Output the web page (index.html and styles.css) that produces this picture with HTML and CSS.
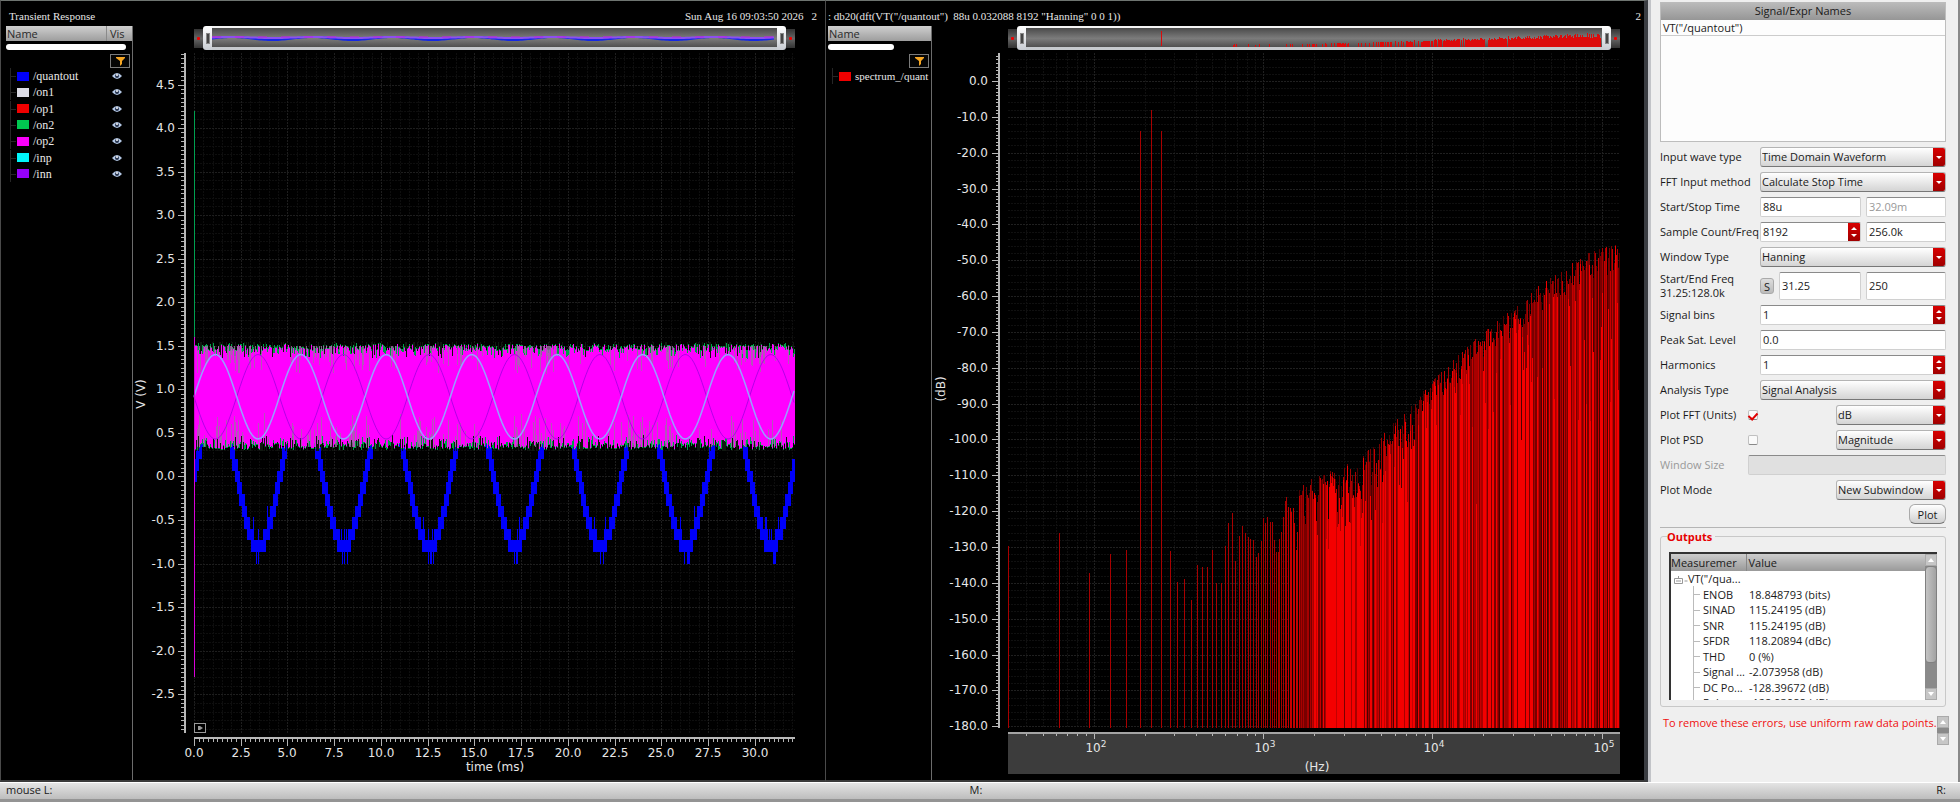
FILE: index.html
```html
<!DOCTYPE html>
<html lang="en">
<head>
<meta charset="utf-8">
<title>Transient Response</title>
<link rel="stylesheet" href="styles.css">
</head>
<body>
<main class="workspace">
  <section class="pane pane-time">
    <header class="pane-title"><span>Transient Response</span><span class="push">Sun Aug 16 09:03:50 2026</span><span class="pane-no">2</span></header>
    <div class="pane-body">
      <aside class="legend">
        <div class="legend-head"><span class="head-name">Name</span><span class="head-vis">Vis</span></div>
        <div class="legend-scroll"></div>
        <button class="filter" aria-label="Filter"><svg width="9" height="9" viewBox="0 0 9 9"><path d="M0 0h9v1L6 4v3L4 9V4L0 1z" fill="#f6a623"/></svg></button>
        <ul class="signals" id="signals"></ul>
      </aside>
      <div class="chart">
        <div class="slider"><span class="stop"></span><span class="grip"><i></i></span><svg class="mini" id="miniTime"></svg><span class="grip grip-end"><i></i></span><span class="stop"></span></div>
        <svg class="plot" id="timePlot"></svg>
      </div>
    </div>
  </section>
  <section class="pane pane-freq">
    <header class="pane-title"><span class="expr">: db20(dft(VT("/quantout")&nbsp; 88u 0.032088 8192 "Hanning" 0 0 1))</span><span class="push pane-no">2</span></header>
    <div class="pane-body">
      <aside class="legend legend-narrow">
        <div class="legend-head"><span class="head-name">Name</span></div>
        <div class="legend-scroll"></div>
        <button class="filter" aria-label="Filter"><svg width="9" height="9" viewBox="0 0 9 9"><path d="M0 0h9v1L6 4v3L4 9V4L0 1z" fill="#f6a623"/></svg></button>
        <ul class="signals signals-single"><li><span class="swatch swatch-red"></span><span>spectrum_/quant</span></li></ul>
      </aside>
      <div class="chart">
        <div class="slider"><span class="stop"></span><span class="grip"><i></i></span><svg class="mini" id="miniFreq"></svg><span class="grip grip-end"><i></i></span><span class="stop"></span></div>
        <svg class="plot" id="freqPlot"></svg>
      </div>
    </div>
  </section>
  <form class="panel">
    <div class="names">
      <div class="names-head">Signal/Expr Names</div>
      <div class="names-item">VT("/quantout")</div>
    </div>
    <div class="fields">
      <div class="row"><label for="wave">Input wave type</label><div class="combo"><select id="wave"><option>Time Domain Waveform</option></select><span class="arrow"></span></div></div>
      <div class="row"><label for="method">FFT Input method</label><div class="combo"><select id="method"><option>Calculate Stop Time</option></select><span class="arrow"></span></div></div>
      <div class="row"><label for="start">Start/Stop Time</label><div class="box"><input id="start" value="88u"></div><div class="box box-side"><input value="32.09m" aria-label="Stop time" disabled></div></div>
      <div class="row"><label for="count">Sample Count/Freq</label><div class="box"><input id="count" value="8192"><span class="spin"></span></div><div class="box box-side"><input value="256.0k" aria-label="Sample frequency"></div></div>
      <div class="row"><label for="window">Window Type</label><div class="combo"><select id="window"><option>Hanning</option></select><span class="arrow"></span></div></div>
      <div class="row row-tall"><label for="fstart">Start/End Freq<br>31.25:128.0k</label><button type="button" class="small">S</button><div class="box"><input id="fstart" value="31.25"></div><div class="box box-side"><input value="250" aria-label="End frequency"></div></div>
      <div class="row"><label for="bins">Signal bins</label><div class="box"><input id="bins" value="1"><span class="spin"></span></div></div>
      <div class="row"><label for="peak">Peak Sat. Level</label><div class="box"><input id="peak" value="0.0"></div></div>
      <div class="row"><label for="harm">Harmonics</label><div class="box"><input id="harm" value="1"><span class="spin"></span></div></div>
      <div class="row"><label for="analysis">Analysis Type</label><div class="combo"><select id="analysis"><option>Signal Analysis</option></select><span class="arrow"></span></div></div>
      <div class="row row-check"><label for="fft">Plot FFT (Units)</label><input type="checkbox" id="fft" checked><div class="combo combo-short"><select aria-label="Units"><option>dB</option></select><span class="arrow"></span></div></div>
      <div class="row row-check"><label for="psd">Plot PSD</label><input type="checkbox" id="psd"><div class="combo combo-short"><select aria-label="PSD scale"><option>Magnitude</option></select><span class="arrow"></span></div></div>
      <div class="row row-check"><label for="wsize" class="muted">Window Size</label><div class="box box-off"><input id="wsize" disabled></div></div>
      <div class="row row-check"><label for="mode">Plot Mode</label><div class="combo combo-short"><select id="mode"><option>New Subwindow</option></select><span class="arrow"></span></div></div>
    </div>
    <div class="actions"><button type="button" class="plot-btn">Plot</button></div>
    <fieldset class="outputs">
      <legend>Outputs</legend>
      <div class="results">
        <table>
          <thead><tr><th class="sorted">Measuremer</th><th>Value</th></tr></thead>
          <tbody>
            <tr class="root"><td><svg width="17" height="11" viewBox="0 0 17 11"><path d="M.5 3.500h8v5h-8zM2 6h5M4.500 1v2M10.500 6h3" fill="none" stroke="#999"/></svg>VT("/qua...</td><td></td></tr>
            <tr><td>ENOB</td><td>18.848793 (bits)</td></tr>
            <tr><td>SINAD</td><td>115.24195 (dB)</td></tr>
            <tr><td>SNR</td><td>115.24195 (dB)</td></tr>
            <tr><td>SFDR</td><td>118.20894 (dBc)</td></tr>
            <tr><td>THD</td><td>0 (%)</td></tr>
            <tr><td>Signal ...</td><td>-2.073958 (dB)</td></tr>
            <tr><td>DC Po...</td><td>-128.39672 (dB)</td></tr>
            <tr><td>Rela...</td><td>-128.93988 (dB)</td></tr>
          </tbody>
        </table>
        <div class="vbar"><span class="up"></span><span class="thumb"></span><span class="track"></span><span class="down"></span></div>
      </div>
    </fieldset>
    <div class="error"><p>To remove these errors, use uniform raw data points.</p><div class="vbar vbar-mini"><span class="up"></span><span class="track"></span><span class="down"></span></div></div>
  </form>
</main>
<footer class="status"><span>mouse L:</span><span class="status-mid">M:</span><span class="status-end">R:</span></footer>
<script src="plots.js"></script>
</body>
</html>
```
FILE: styles.css
```css
* { box-sizing: border-box; }
body { margin: 0; height: 100vh; display: flex; flex-direction: column; background: #000; font: 11px/15px "Open Sans", "Noto Sans", sans-serif; color: #1a1a1a; overflow: hidden; }
input, select, button { font: inherit; color: inherit; margin: 0; }

.workspace { flex: 1; min-height: 0; display: flex; }
.pane { flex: 1 1 0; min-width: 0; display: flex; flex-direction: column; border: 1px solid #4a4a4a; border-top-color: #6e7470; border-bottom: 2px solid #3a3a3a; background: #000; }
.pane-time { flex-basis: 8px; }
.pane-freq { border-left: 0; border-right: 4px solid #3a3d42; }
.pane-title { height: 25px; display: flex; align-items: center; padding: 4px 8px 0 8px; color: #e6e6e6; font: 11px/16px "Liberation Serif", serif; white-space: pre; }
.pane-freq .pane-title { padding: 4px 3px 0 2px; }
.push { margin-left: auto; }
.pane-title .pane-no { padding-left: 8px; }
.pane-body { flex: 1; min-height: 0; display: flex; }

.legend { width: 132px; flex: none; padding-left: 5px; border-right: 1px solid #6c6c6c; overflow: hidden; display: flex; flex-direction: column; align-items: flex-start; }
.legend-narrow { width: 106px; padding-left: 2px; }
.legend-head { align-self: stretch; height: 15px; display: flex; background: linear-gradient(#cfcfcf, #9d9d9d); color: #2a2a2a; }
.head-name { flex: 1; padding-left: 1px; }
.head-vis { width: 26px; padding-left: 3px; border-left: 1px solid #8a8a8a; }
.legend-scroll { width: 120px; height: 6px; margin-top: 3px; border-radius: 3px; background: #fff; flex: none; }
.legend-narrow .legend-scroll { width: 66px; }
.filter { align-self: flex-end; margin: 4px 2px 0 0; width: 20px; height: 14px; padding: 0; border: 1px solid #7b7b7b; background: #050505; display: flex; align-items: center; justify-content: center; flex: none; }
.signals { list-style: none; margin: 0; padding: 0 10px 0 0; width: 100%; height: 114px; display: flex; flex-direction: column; justify-content: space-between; color: #e8e8e8; font: 12px/16px "Liberation Serif", serif; white-space: nowrap; }
.signals li { display: flex; align-items: center; padding-left: 4px; height: 16px; }
.signals li::before { content: ""; width: 5px; height: 16px; border-left: 1px solid #262626; background: linear-gradient(#262626, #262626) 0 8px / 5px 1px no-repeat; margin-right: 1px; flex: none; }
.signals-single { height: 16px; padding: 0; font-size: 11px; }
.swatch { width: 12px; height: 9px; margin-right: 4px; flex: none; }
.swatch-blue { background: #0000fa; }
.swatch-white { background: #dcdce6; }
.swatch-red { background: #f00000; }
.swatch-green { background: #00c850; }
.swatch-pink { background: #fa00fa; }
.swatch-cyan { background: #00f5fa; }
.swatch-purple { background: #9600fa; }
.signals svg { margin-left: auto; }

.chart { flex: 1; min-width: 0; display: flex; flex-direction: column; }
.slider { height: 24px; margin: 0 30px 0 61px; display: flex; align-items: center; flex: none; }
.pane-freq .slider { margin: 0 24px 0 76px; }
.stop { width: 9px; height: 19px; background: linear-gradient(#333, #666, #333); display: flex; align-items: center; justify-content: center; }
.stop::before { content: ""; width: 3px; height: 3px; background: #e00; border-radius: 1px; }
.grip { width: 9px; height: 24px; background: linear-gradient(#fff, #c8ccd2); border-radius: 3px 0 0 3px; display: flex; align-items: center; justify-content: center; }
.grip-end { border-radius: 0 3px 3px 0; }
.grip i { width: 4px; height: 11px; background: #444; border: 1px solid #888; }
.mini { flex: 1; min-width: 0; height: 24px; border-top: 2px solid #f4f4f4; border-bottom: 3px solid #c6cace; background: linear-gradient(#4a4a4a, #7c7c7c 55%, #505050); }
.plot { display: block; width: 100%; flex: 1; min-height: 0; }
.plot text { font: 12px "DejaVu Sans", sans-serif; fill: #e6e6e6; }

.panel { width: 312px; flex: none; display: flex; flex-direction: column; padding: 2px 12px 0 9px; background: #efefef; border: 0 solid #a2a2a2; border-left: 3px solid #c2c4c8; border-right: 2px solid #888; }
.names { height: 140px; background: #fdfdfd; border: 1px solid #bdbdbd; border-top: 0; }
.names-head { height: 18px; text-align: center; line-height: 18px; background: linear-gradient(#bcbcbc, #969696); }
.names-item { height: 16px; padding-left: 2px; border-bottom: 1px solid #ccc; }
.fields { display: flex; flex-direction: column; gap: 5px; margin-top: 5px; }
.row { display: flex; gap: 5px; height: 20px; align-items: stretch; }
.row > label { width: 95px; flex: none; align-self: center; white-space: nowrap; padding-bottom: 1px; }
.row > label.muted { color: #999; }
.row-tall { height: 28px; }
.row-tall > label { line-height: 14px; }
.row-check > label { width: 83px; }
.combo { flex: 1; min-width: 0; display: flex; border: 1px solid #b4b4b4; border-bottom-color: #777; border-radius: 3px; background: linear-gradient(#fff, #d4d4d4); overflow: hidden; }
.combo-short { flex: none; width: 110px; margin-left: auto; }
.combo select { appearance: none; flex: 1; min-width: 0; border: 0; background: none; padding: 0 0 1px 1px; outline: 0; }
.arrow { width: 12px; background: linear-gradient(#d80000, #a00000); display: flex; align-items: center; justify-content: center; }
.arrow::before { content: ""; border: 3px solid transparent; border-top: 3px solid #fff; border-bottom: 0; }
.box { flex: 1; min-width: 0; display: flex; background: #fff; border: 1px solid #d0d0d0; border-top-color: #8a8a8a; border-radius: 2px; overflow: hidden; }
.box-side { flex: none; width: 80px; }
.box-off { background: #e0e0e0; }
.box input { flex: 1; width: 0; min-width: 0; border: 0; padding: 0 2px 1px; background: none; outline: 0; }
.box input:disabled { color: #999; }
.spin { width: 12px; background: linear-gradient(#d80000, #a00000); display: flex; flex-direction: column; align-items: center; justify-content: space-evenly; }
.spin::before { content: ""; border: 3px solid transparent; border-bottom-color: #fff; border-top: 0; }
.spin::after { content: ""; border: 3px solid transparent; border-top-color: #fff; border-bottom: 0; }
.small { align-self: center; width: 14px; height: 16px; padding: 0; border: 1px solid #aaa; border-radius: 3px; background: linear-gradient(#ddd, #bbb); line-height: 13px; }
.row input[type="checkbox"] { appearance: none; align-self: center; width: 10px; height: 10px; border: 1px solid #c0c0c0; border-bottom-color: #888; border-radius: 2px; background: #fafafa; display: flex; justify-content: center; }
.row input[type="checkbox"]:checked::before { content: ""; width: 4px; height: 7px; border: solid #e00000; border-width: 0 2px 2px 0; transform: rotate(42deg); flex: none; }
.actions { display: flex; justify-content: flex-end; padding: 4px 0 3px; border-bottom: 1px solid #b5b5b5; }
.plot-btn { width: 37px; height: 20px; padding: 0; border: 1px solid #aaa; border-bottom-color: #777; border-radius: 6px; background: linear-gradient(#fff, #d0d0d0); }
.outputs { margin: 1px 0 0; padding: 8px 8px 6px; border: 1px solid #c8c8c8; border-radius: 3px; min-width: 0; }
.outputs legend { margin-left: -2px; padding: 0 3px 0 0; color: #e60000; font-weight: bold; }
.results { height: 148px; display: flex; overflow: hidden; background: #fff; border: solid #333; border-width: 2px 0 0 2px; }
.results table { flex: 1; width: 100%; min-width: 0; align-self: flex-start; table-layout: fixed; border-collapse: collapse; white-space: nowrap; line-height: 15px; }
.results th { height: 17px; padding: 0 0 0 2px; text-align: left; font-weight: normal; background: linear-gradient(#cdcdcd, #999); }
.results th.sorted { width: 75px; border-right: 1px solid #888; padding: 0; }
.results td { height: 15px; padding: 0 0 0 3px; }
.results tr:nth-child(even) td { height: 16px; }
.results td:first-child { padding-left: 32px; background: linear-gradient(#bbb, #bbb) 22px 0 / 1px 100% no-repeat, linear-gradient(#bbb, #bbb) 22px 8px / 7px 1px no-repeat; }
.results .root td:first-child { padding-left: 3px; background: none; }
.root svg { vertical-align: middle; margin-right: -3px; }
.vbar { width: 12px; flex: none; display: flex; flex-direction: column; background: #8a8a8a; }
.vbar .up, .vbar .down { height: 12px; display: flex; align-items: center; justify-content: center; background: #c6c6c6; border: 1px solid #aaa; flex: none; }
.up::before { content: ""; border: 3px solid transparent; border-top: 0; border-bottom: 4px solid #fff; }
.down::before { content: ""; border: 3px solid transparent; border-bottom: 0; border-top: 4px solid #fff; }
.thumb { height: 97px; border: 1px solid #808080; border-radius: 4px; background: linear-gradient(90deg, #c4c4c4, #a2a2a2); }
.track { flex: 1; }
.error { display: flex; justify-content: space-between; margin-top: 9px; padding-left: 3px; color: #f01010; }
.error p { margin: 0; line-height: 14px; white-space: nowrap; }
.vbar-mini { height: 29px; }

.status { height: 20px; flex: none; display: grid; grid-template-columns: 1fr auto 1fr; padding: 0 14px 0 6px; line-height: 14px; background: linear-gradient(#e4e4e4, #bdbdbd); border-top: 1px solid #fff; border-bottom: 3px solid #949494; }
.status-end { text-align: right; }
```
FILE: plots.js
```js
(function () {
  var signals = [["/quantout", "blue"], ["/on1", "white"], ["/op1", "red"], ["/on2", "green"], ["/op2", "pink"], ["/inp", "cyan"], ["/inn", "purple"]];
  var eye = '<svg width="10" height="8" viewBox="0 0 10 8"><path d="M0 4Q5-2 10 4Q5 10 0 4z" fill="#b4c8e6"/><circle cx="5" cy="4" r="2" fill="#26334d"/><circle cx="5" cy="3" r="1" fill="#fff"/></svg>';
  document.getElementById("signals").innerHTML = signals.map(function (s) {
    return '<li><span class="swatch swatch-' + s[1] + '"></span><span>' + s[0] + "</span>" + eye + "</li>";
  }).join("");

  var seed;
  function rnd() { seed = (seed * 1664525 + 1013904223) % 4294967296; return seed / 4294967296; }
  function path(d, color, extra) { return '<path d="' + d + '" stroke="' + color + '" fill="none" ' + (extra || "") + "/>"; }
  function v(x, y1, y2) { return "M" + (Math.round(x) + 0.5) + " " + Math.round(y1) + "V" + Math.round(y2); }
  function h(y, x1, x2) { return "M" + Math.round(x1) + " " + (Math.round(y) + 0.5) + "H" + Math.round(x2); }
  function text(x, y, s, anchor, more) { return '<text x="' + Math.round(x) + '" y="' + Math.round(y) + '" text-anchor="' + anchor + '" ' + (more || "") + ">" + s + "</text>"; }
  var crisp = 'shape-rendering="crispEdges"', dots = crisp + ' stroke-dasharray="2 1"';

  function drawTime() {
    var svg = document.getElementById("timePlot"), r = svg.getBoundingClientRect();
    var L = 61, R = r.width - 30, T = 3, B = r.height - 47, axis = 52;
    function X(t) { return L + (R - L) * t / 32.15; }
    function Y(u) { return T + (B - T) * (4.862 - u) / 7.807; }
    var out = "", minor = "", major = "", ticks = "", i, x;
    for (i = 0; i <= 64; i++) { if (i % 5) minor += v(X(i / 2), T, B); else major += v(X(i / 2), T, B); }
    for (i = -29; i <= 48; i++) { if (i % 5) minor += h(Y(i / 10), L, R); else major += h(Y(i / 10), L, R); }
    out += path(minor, "#0e0e0e", dots) + path(major, "#1e1e1e", dots);
    for (i = -58; i <= 97; i++) { ticks += h(Y(i / 20), i % 10 ? axis - 4 : axis - 7, axis); if (i % 10 === 0) out += text(axis - 10, Y(i / 20) + 4, (i / 20).toFixed(1), "end"); }
    for (i = 0; i <= 128; i++) { ticks += v(X(i / 4), B + 5, B + (i % 10 ? 9 : 13)); if (i % 10 === 0) out += text(X(i / 4), B + 24, (i / 4).toFixed(1), "middle"); }
    out += path(ticks, "#b4b4b4", crisp) + path("M" + axis + " " + T + "V" + B + "M" + L + " " + (B + 5) + "H" + R, "#b8b8b8", 'stroke-width="2" ' + crisp);
    out += text((L + R) / 2, B + 38, "time (ms)", "middle") + text(0, 0, "V (V)", "middle", 'transform="translate(12 ' + Math.round(Y(0.95)) + ') rotate(-90)"');

    seed = 7;
    var w = 2 * Math.PI / 4.571, step = 0.13333, px = 32.15 / (R - L), blue = "", a, b, c, d;
    for (x = 0; x < R - L; x++) {
      a = 0.8 * Math.sin(w * (x - 1.5) * px); b = 0.8 * Math.sin(w * (x + 1.5) * px);
      c = Math.floor(Math.min(a, b) / step - 0.5); d = Math.ceil(Math.max(a, b) / step - 0.5);
      if (a < -0.68) { if (rnd() < 0.25) d++; if (a < -0.77 && rnd() < 0.3) c--; }
      blue += v(L + x, Y((d + 0.5) * step), Y((c + 0.5) * step));
    }
    out += path(blue, "#0000fa", crisp);
    var green = "", pink = "", grey = "", gap = "", y, z, patch;
    for (x = 0; x < R - L; x++) {
      y = Y(1.53) + rnd() * 7; z = Y(0.3) - rnd() * 7;
      patch = 0.14 + 0.12 * Math.sin(x / 17) + 0.06 * Math.sin(x / 5);
      green += v(L + x, y, z);
      pink += v(L + x, y + (rnd() < 0.4 ? rnd() * 9 : 1), z - (rnd() < 0.4 ? rnd() * 9 : 1));
      if (rnd() < 0.16) gap += v(L + x, Y(1.54), Y(1.5) + rnd() * 12);
      if (rnd() < 0.16) gap += v(L + x, Y(0.37) - rnd() * 9, Y(0.29));
      if (rnd() < patch * 1.6) grey += v(L + x, Y(1.5), Y(1.45) + rnd() * 24);
      if (rnd() < patch * 1.4) grey += v(L + x, Y(0.45) - rnd() * 24, Y(0.34));
    }
    out += path(green, "#00a046", crisp) + path(pink, "#ff00ff", crisp) + path(grey, "#a06ca8", crisp + ' opacity="0.8"') + path(gap, "#101810", crisp);
    var p = "", q = "";
    for (x = 0; x <= R - L; x += 2) {
      y = 0.485 * Math.sin(w * x * px);
      p += (x ? "L" : "M") + (L + x) + " " + Y(0.915 + y).toFixed(1);
      q += (x ? "L" : "M") + (L + x) + " " + Y(0.915 - y).toFixed(1);
    }
    out += path(q, "#b400e8") + path(p, "#96a0ff", 'stroke-width="1.500"');
    out += path(v(L, Y(4.2), Y(1.6)), "#00a050", crisp) + path(v(L, Y(1.6), Y(-2.3)), "#d800d8", crisp);
    out += '<rect x="' + (L + 0.5) + '" y="' + (Math.round(B) - 9.5) + '" width="11" height="9" fill="#000" stroke="#999"/><path d="M' + (L + 4) + " " + (Math.round(B) - 7) + 'h2l3 2-3 2h-2z" fill="#999"/>';
    svg.innerHTML = out;

    var mini = document.getElementById("miniTime"), mw = mini.getBoundingClientRect().width, m1 = "", m2 = "";
    for (x = 0; x <= mw - 2; x += 2) {
      y = Math.sin(w * x * 32.15 / mw);
      m1 += (x ? "L" : "M") + x + " " + (10.5 - 1.5 * y).toFixed(1);
      m2 += (x ? "L" : "M") + x + " " + (9.5 - 0.5 * y).toFixed(1);
    }
    mini.innerHTML = path(m1, "#1428e6", 'stroke-width="2"') + path(m2, "#8c50f0", 'stroke-width="2"') + path("M0 9H" + (mw - 2), "#c020e0", 'stroke-dasharray="9 14"');
  }

  var firstBins = [546, 533, 573, 554, 550, 131, 110, 131, 551, 582, 579, 600, 565, 567, 567, 550, 583, 583, 546, 523, 513, 561, 536, 526, 533, 537, 539, 540, 557, 553, 541, 518, 523, 517, 522, 522, 540, 552, 552, 539, 532, 517, 501, 497, 507, 508, 512, 508, 523, 550, 532, 496];
  var envelope = [[2.2, -113], [2.32, -110], [2.58, -105], [2.72, -98], [3.01, -83], [3.2, -74], [3.48, -63], [3.62, -57], [3.91, -48], [4.08, -45.5], [4.11, -47]];
  function ceiling(dec) {
    for (var i = 1; i < envelope.length - 1 && envelope[i][0] < dec; i++) {}
    var a = envelope[i - 1], b = envelope[i];
    return a[1] + (b[1] - a[1]) * (dec - a[0]) / (b[0] - a[0]);
  }

  function drawFreq() {
    var svg = document.getElementById("freqPlot"), r = svg.getBoundingClientRect();
    var L = 76, R = r.width - 24, T = 3, B = r.height - 52, axis = 67;
    var lo = Math.log10(31.25), hi = Math.log10(128000);
    function X(f) { return L + (R - L) * (Math.log10(f) - lo) / (hi - lo); }
    function Y(u) { return T + (B - T) * (7.8 - u) / 188.3; }
    var out = "", minor = "", major = "", ticks = "", i, k, f, x;
    for (k = 1; k <= 5; k++) for (i = 1; i < 10; i++) {
      f = i * Math.pow(10, k); if (f < 31.25 || f > 128000) continue;
      if (i > 1) minor += v(X(f), T, B); else major += v(X(f), T, B);
      ticks += v(X(f), B + 5, B + (i > 1 ? 8 : 11));
      if (i === 1) out += text(X(f) + 2, B + 24, '10<tspan dy="-5" style="font-size:9px">' + k + "</tspan>", "middle");
    }
    for (i = -90; i <= 3; i++) { if (i % 5) minor += h(Y(i * 2), L, R); else major += h(Y(i * 2), L, R); }
    out = '<rect x="' + L + '" y="' + (B + 4) + '" width="' + (R - L) + '" height="42" fill="#3c3c3c"/>' + path(minor, "#101010", dots) + path(major, "#202020", dots) + out;
    for (i = -180; i <= 7; i++) { ticks += h(Y(i), i % 10 ? axis - 3 : axis - 7, axis); if (i % 10 === 0) out += text(axis - 11, Y(i) + 4, i.toFixed(1), "end"); }
    out += path(ticks, "#b8b8b8", crisp) + path("M" + axis + " " + T + "V" + B, "#b8b8b8", 'stroke-width="2" ' + crisp) + path("M" + L + " " + (B + 5) + "H" + R, "#a4a4a4", 'stroke-width="2" ' + crisp);
    out += text((L + R) / 2 + 3, B + 43, "(Hz)", "middle") + text(0, 0, "(dB)", "middle", 'transform="translate(13 ' + Math.round(Y(-86)) + ') rotate(-90)"');

    seed = 21;
    var shades = { "#4c0000": "", "#780000": "", "#a80000": "", "#c40000": "", "#f40000": "" }, names = Object.keys(shades);
    firstBins.forEach(function (y, n) { shades[n < 44 ? "#a80000" : "#c40000"] += v(X((n + 1) * 31.25), Y((81 - y) / 3.585), B); });
    var start = Math.round(X(1640)), bright = X(2000), solidA = X(2350), solidB = X(3950), dec, top, run = 0;
    for (x = start; x < R; x++) {
      dec = lo + (hi - lo) * (x - L) / (R - L) - 1;
      top = Y(ceiling(dec)) + Math.pow(rnd(), 1.6) * (dec < 2.9 ? 48 : 28);
      if (x % 2) shades[names[Math.floor(rnd() * 3)]] += v(x, top, B); else shades[names[1 + Math.floor(rnd() * 3)]] += v(x, top, B);
      if (run > 0) run--; else if (rnd() < 0.27) run = Math.floor(rnd() * 4);
      if ((x > solidA && x < solidB) ? rnd() < 0.85 : x > bright && (run > 0 || rnd() < 0.22)) {
        shades["#f40000"] += v(x, top + Math.pow(rnd(), 2) * (dec > 3.2 ? 160 : 60), B);
      }
    }
    names.forEach(function (n) { out += path(shades[n], n, crisp); });
    svg.innerHTML = out;

    var mini = document.getElementById("miniFreq"), mw = mini.getBoundingClientRect().width, m = v(mw * 0.234, 3, 18);
    for (x = Math.round(mw * 0.33); x < mw - 1; x++) {
      f = x / mw;
      if (rnd() < (f - 0.31) * 1.9) m += v(x, 18 - Math.max(2, (f - 0.4) * 20) * (0.7 + rnd() * 0.4), 19);
    }
    mini.innerHTML = path(m, "#dc0a0a");
  }

  function draw() { drawTime(); drawFreq(); }
  draw();
  window.addEventListener("resize", draw);
}());
```
